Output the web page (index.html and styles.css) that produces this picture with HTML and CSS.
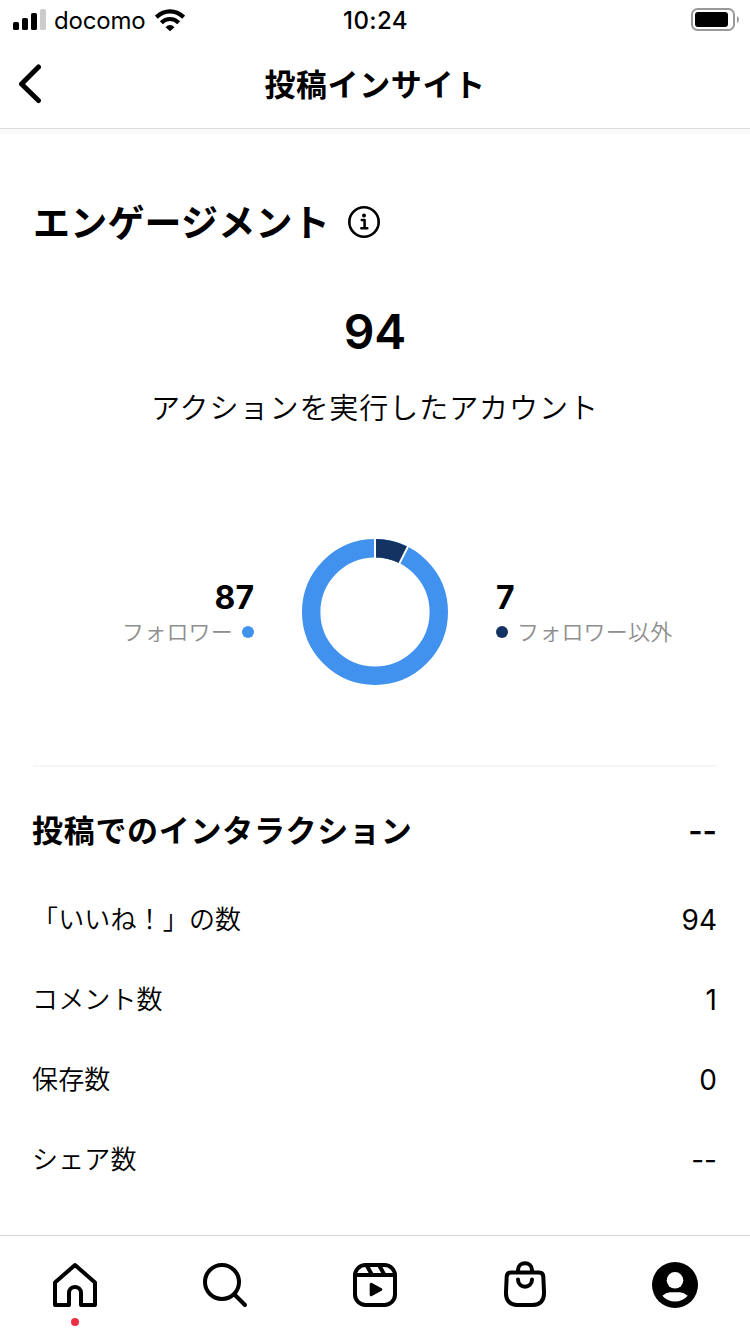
FILE: index.html
```html
<!DOCTYPE html>
<html lang="ja">
<head>
<meta charset="utf-8">
<title>投稿インサイト</title>
<link rel="stylesheet" href="styles.css">
</head>
<body>
<div class="screen">
  <div class="status">
    <div class="status-left">
      <svg class="signal" width="34" height="22" viewBox="0 0 34 22"><rect x="0" y="13" width="6" height="8" rx="1.6"/><rect x="9" y="9" width="6" height="12" rx="1.6"/><rect x="18" y="4" width="6" height="17" rx="1.6"/><rect x="27" y="0" width="6" height="21" rx="1.6" fill="#ccc"/></svg>
      <span class="carrier">docomo</span>
      <svg class="wifi" width="30" height="23" viewBox="0 0 30 23"><g fill="none" stroke="#000" stroke-width="4.2"><path d="M1.3 8.2Q7.5 2.3 15 2.3T28.700 8.200"/><path d="M6.3 13.800Q10.200 10 15 10T23.700 13.800"/></g><path d="M10.500 18.200Q15 14 19.500 18.200L15 22.300Z"/></svg>
    </div>
    <span class="clock">10:24</span>
    <svg class="battery" width="49" height="24" viewBox="0 0 49 24"><rect x="1" y="1" width="42" height="21" rx="5.500" fill="none" stroke="#999" stroke-width="2"/><rect x="4" y="4" width="33" height="15" rx="3"/><path d="M46 8Q48 9 48 11.500T46 15Z" fill="#999"/></svg>
  </div>
  <header class="nav">
    <svg class="back" width="24" height="40" viewBox="0 0 24 40"><path d="M20.500 3L3.500 20L20.500 36.500" fill="none" stroke="#000" stroke-width="5" stroke-linecap="round" stroke-linejoin="round"/></svg>
    <h1 class="nav-title">投稿インサイト</h1>
  </header>
  <main class="content">
    <div class="heading">
      <h2 class="heading-text">エンゲージメント</h2>
      <svg class="info" width="34" height="34" viewBox="0 0 34 34"><circle cx="17" cy="17" r="14.700" fill="none" stroke="#000" stroke-width="2.600"/><circle cx="17" cy="10.500" r="2"/><path d="M14.800 15H17.600V23.300M14.300 23.300H20.300" fill="none" stroke="#000" stroke-width="2.500" stroke-linecap="round" stroke-linejoin="round"/></svg>
    </div>
    <div class="total">94</div>
    <div class="total-label">アクションを実行したアカウント</div>
    <div class="breakdown">
      <div class="legend legend-left">
        <div class="legend-value">87</div>
        <div class="legend-label">フォロワー<i class="dot dot-blue"></i></div>
      </div>
      <svg class="donut" width="146" height="146" viewBox="0 0 146 146"><g fill="none" stroke-width="18.400"><circle cx="73" cy="73" r="63.800" stroke="#4192ef"/><path d="M73 9.200A63.800 63.800 0 0 1 101.600 15.970" stroke="#143362"/></g><path d="M73 0V20M106.500 6.500L96 27.100" fill="none" stroke="#fff" stroke-width="2"/></svg>
      <div class="legend">
        <div class="legend-value">7</div>
        <div class="legend-label"><i class="dot dot-navy"></i>フォロワー以外</div>
      </div>
    </div>
    <div class="rule"></div>
    <div class="row row-head"><h3 class="row-title">投稿でのインタラクション</h3><span class="row-total">--</span></div>
    <div class="row"><span class="row-label">「いいね！」の数</span><span class="row-value">94</span></div>
    <div class="row"><span class="row-label">コメント数</span><span class="row-value">1</span></div>
    <div class="row"><span class="row-label">保存数</span><span class="row-value">0</span></div>
    <div class="row"><span class="row-label">シェア数</span><span class="row-value">--</span></div>
  </main>
  <nav class="tabs">
    <div class="tab"><svg width="50" height="50" viewBox="0 0 50 50"><path d="M5 22.500L25 5L45 22.500V45H31V33C31 25 19 25 19 33V45H5Z" fill="none" stroke="#000" stroke-width="4" stroke-linejoin="round"/></svg><i class="notice"></i></div>
    <div class="tab"><svg width="50" height="50" viewBox="0 0 50 50"><g fill="none" stroke="#000" stroke-width="4" stroke-linecap="round"><circle cx="22" cy="22" r="17"/><path d="M34.500 34.500L45 45"/></g></svg></div>
    <div class="tab"><svg width="50" height="50" viewBox="0 0 50 50"><g fill="none" stroke="#000" stroke-width="4"><rect x="5" y="5" width="40" height="40" rx="10.500"/><path d="M5 15H45M16.500 5L22 15M29 5L34.500 15"/></g><path d="M21.200 24.200L30.800 29.500L21.200 34.800Z" stroke="#000" stroke-width="3" stroke-linejoin="round"/></svg></div>
    <div class="tab"><svg class="bag" width="50" height="50" viewBox="0 0 50 50"><g fill="none" stroke="#000" stroke-width="4" stroke-linecap="round"><path d="M11 12.500H39Q43 12.500 43.300 16.500L44 32C44.500 40.500 40 45 33 45H17C10 45 5.500 40.500 6 32L6.700 16.500Q7 12.500 11 12.500Z"/><path d="M18 12V10C18 1 32 1 32 10V12M18 19.500C18 29 32 29 32 19.500"/></g></svg></div>
    <div class="tab"><svg width="50" height="50" viewBox="0 0 50 50"><circle cx="25" cy="25" r="23"/><circle cx="25" cy="20.300" r="8.300" fill="#fff"/><path d="M12.300 35.800Q16 32.300 20 32.300H30Q34 32.300 37.700 35.800C31.500 43.500 18.500 43.500 12.300 35.800Z" fill="#fff"/></svg></div>
  </nav>
</div>
</body>
</html>
```
FILE: styles.css
```css
* { box-sizing: border-box; }
body {
  margin: 0;
  background: #fff;
  color: #000;
  font-family: Inter, "Noto Sans CJK JP", sans-serif;
}
h1, h2, h3 { margin: 0; font-weight: 600; }
svg { display: block; flex: none; }
.screen { width: 750px; height: 1334px; display: flex; flex-direction: column; overflow: hidden; }
.status { height: 40px; flex: none; display: grid; grid-template-columns: 1fr auto 1fr; grid-template-rows: 40px; align-items: center; padding: 0 10px 0 13px; }
.status-left { display: flex; align-items: center; }
.signal { margin-bottom: 1px; }
.carrier { font-size: 24px; line-height: 38px; letter-spacing: -0.2px; margin-left: 7px; padding-top: 2px; }
.wifi { margin-left: 10px; }
.clock { font-size: 24px; line-height: 38px; font-weight: 500; letter-spacing: 0.4px; padding-top: 2px; margin-left: -2px; }
.battery { justify-self: end; }
.nav { height: 89px; flex: none; display: grid; grid-template-columns: 40px 1fr 40px; align-items: center; padding: 0 18px; border-bottom: 1px solid #dbdbdb; }
.nav-title { text-align: center; font-size: 31px; line-height: 40px; letter-spacing: 0.6px; padding-top: 1px; }
.content { flex: 1; border-top: 5px solid #fafafa; padding: 63px 33px 0; }
.heading { display: flex; align-items: center; height: 52px; gap: 17px; }
.heading-text { font-size: 37px; line-height: 52px; letter-spacing: 0.2px; white-space: nowrap; padding-top: 2px; }
.info { margin-bottom: 2px; }
.total { margin-top: 53px; text-align: center; font-size: 48px; line-height: 60px; font-weight: 600; }
.total-label { margin-top: 27px; text-align: center; font-size: 29px; line-height: 40px; font-weight: 350; letter-spacing: 0.95px; }
.breakdown { display: grid; grid-template-columns: 221px 146px 1fr; column-gap: 48px; align-items: center; margin-top: 110px; }
.legend { padding-top: 2px; }
.legend-left { text-align: right; }
.legend-left .legend-label { justify-content: flex-end; }
.legend-value { font-size: 32px; line-height: 38px; font-weight: 700; }
.legend-label { display: flex; align-items: center; gap: 9px; font-size: 22px; line-height: 30px; font-weight: 350; color: #8e8e8e; letter-spacing: 0.2px; }
.dot { width: 12px; height: 12px; border-radius: 50%; }
.dot-blue { background: #4192ef; }
.dot-navy { background: #143362; }
.rule { height: 2px; margin-top: 80px; background: #f7f7f7; }
.row { display: flex; align-items: center; justify-content: space-between; height: 80px; }
.row-head { height: 99px; margin-top: 14px; }
.row-title { font-size: 31px; line-height: 40px; letter-spacing: 0.7px; margin-left: -1px; }
.row-total { font-size: 31px; font-weight: 600; }
.row-label { font-size: 26px; line-height: 36px; font-weight: 350; letter-spacing: 0.15px; margin-left: -1px; }
.row-value { font-size: 28px; line-height: 36px; }
.tabs { height: 99px; flex: none; display: grid; grid-template-columns: repeat(5, 1fr); border-top: 1px solid #d5d5d5; }
.tab { display: flex; flex-direction: column; align-items: center; padding-top: 24px; }
.bag { overflow: visible; }
.notice { width: 8px; height: 8px; margin-top: 8px; border-radius: 50%; background: #ed3045; }
```
